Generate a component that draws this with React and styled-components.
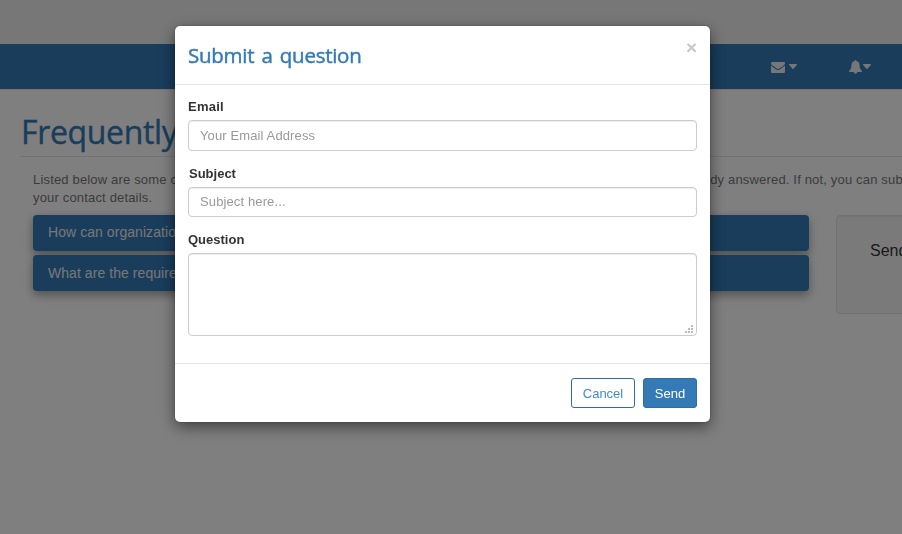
import React from "react";
import styled, { createGlobalStyle } from "styled-components";

const GlobalStyle = createGlobalStyle`
  *, *::before, *::after { box-sizing: border-box; }
  html, body { margin: 0; padding: 0; }
  body {
    overflow: hidden;
    background: #fff;
    color: #777;
    font: 13px/18px "Liberation Sans", Arial, sans-serif;
  }
  button, input, textarea { font: inherit; letter-spacing: inherit; }
`;

const Page = styled.div`
  width: 100%;
  height: 100vh;
  overflow: hidden;
`;

const TopStrip = styled.div`
  height: 44px;
  background: #eee;
`;

const Navbar = styled.nav`
  display: flex;
  justify-content: flex-end;
  align-items: center;
  gap: 52px;
  height: 45px;
  padding-right: 31px;
  background: #337ab7;
  box-shadow: 0 1px 0 #e8e8e8;
`;

const NavItem = styled.a`
  display: flex;
  align-items: center;
  gap: ${(p) => p.$gap}px;
  color: #eee;
  svg { display: block; fill: currentColor; }
`;

const Content = styled.main`
  padding: 0 0 0 20px;
`;

const PageTitle = styled.h1`
  margin: 0;
  height: 68px;
  padding: 23px 0 0 1px;
  border-bottom: 1px solid #e6e6e6;
  color: #337ab7;
  font: 400 32px/40px "Trebuchet MS", "Open Sans", sans-serif;
  letter-spacing: -0.35px;
  -webkit-text-stroke: 0.4px currentColor;
  white-space: nowrap;
`;

const Intro = styled.p`
  margin: 14px 0 8px 13px;
  letter-spacing: 0.17px;
  white-space: nowrap;
`;

const Columns = styled.div`
  display: flex;
  gap: 27px;
  padding-left: 13px;
`;

const QuestionList = styled.div`
  display: flex;
  flex: 0 0 776px;
  flex-direction: column;
  gap: 4px;
`;

const QuestionItem = styled.div`
  height: 36px;
  padding: 0 15px;
  border-radius: 4px;
  background: #337ab7;
  box-shadow: 0 4px 8px rgba(0, 0, 0, 0.2), 0 4px 12px rgba(0, 0, 0, 0.19);
  color: #eee;
  font-size: 14px;
  line-height: ${(p) => p.$line || 35}px;
  letter-spacing: 0.06px;
`;

const AskPanel = styled.aside`
  flex: 0 0 260px;
  height: 99px;
  padding: 25px 33px;
  border: 1px solid #e3e3e3;
  border-radius: 4px;
  background: #f5f5f5;
  box-shadow: inset 0 1px 1px rgba(0, 0, 0, 0.05);
  color: #333;
  font-size: 16px;
  line-height: 20px;
`;

const Backdrop = styled.div`
  position: fixed;
  inset: 0;
  display: flex;
  align-items: flex-start;
  padding: 26px 0 0 175px;
  background: rgba(0, 0, 0, 0.5);
`;

const Dialog = styled.form`
  width: 535px;
  height: 396px;
  border-radius: 5px;
  background: #fff;
  box-shadow: 0 5px 15px rgba(0, 0, 0, 0.5), 0 0 2px rgba(0, 0, 0, 0.3);
`;

const DialogHeader = styled.header`
  display: flex;
  justify-content: space-between;
  height: 59px;
  padding: 14px 13px 0;
  border-bottom: 1px solid #e5e5e5;
`;

const DialogTitle = styled.h2`
  margin: 0;
  color: #337ab7;
  font: 400 20.5px/30px "Trebuchet MS", "Open Sans", sans-serif;
  letter-spacing: -0.27px;
  word-spacing: 2.2px;
  -webkit-text-stroke: 0.45px currentColor;
`;

const CloseButton = styled.button`
  align-self: flex-start;
  height: 14px;
  padding: 0;
  border: 0;
  background: none;
  color: #c8c8c8;
  font-size: 19px;
  font-weight: 700;
  line-height: 13px;
`;

const DialogBody = styled.div`
  height: 279px;
  padding: 13px 13px 0;
  border-bottom: 1px solid #e5e5e5;
`;

const Field = styled.div`
  display: flex;
  flex-direction: column;
  gap: 4px;
  margin-bottom: ${(p) => p.$after || 0}px;
`;

const Label = styled.label`
  padding-left: ${(p) => p.$inset || 0}px;
  color: #333;
  font-weight: 700;
  letter-spacing: ${(p) => p.$tracking || 0}px;
`;

const Input = styled.input`
  width: 100%;
  height: ${(p) => p.$height}px;
  padding: 0 11px ${(p) => p.$lift || 0}px;
  border: 1px solid #ccc;
  border-radius: 4px;
  outline: 0;
  box-shadow: inset 0 1px 1px rgba(0, 0, 0, 0.075);
  letter-spacing: 0.12px;
  &::placeholder { color: #999; opacity: 1; }
`;

const TextAreaFrame = styled.div`
  display: flex;
  position: relative;
  height: 83px;
`;

const TextArea = styled.textarea`
  flex: 1;
  padding: 6px 11px;
  border: 1px solid #ccc;
  border-radius: 4px;
  outline: 0;
  box-shadow: inset 0 1px 1px rgba(0, 0, 0, 0.075);
  resize: none;
`;

const Grip = styled.svg`
  position: absolute;
  right: 4px;
  bottom: 3px;
  fill: #bbb;
`;

const DialogFooter = styled.footer`
  display: flex;
  justify-content: flex-end;
  gap: 8px;
  padding: 14px 13px;
`;

const Button = styled.button`
  width: ${(p) => p.$width}px;
  height: 30px;
  padding: 1px 0 0;
  border: 1px solid #2e6da4;
  border-radius: 3px;
  background: ${(p) => (p.$primary ? "#337ab7" : "#fff")};
  color: ${(p) => (p.$primary ? "#fff" : "#428bca")};
  letter-spacing: 0;
`;

const EnvelopeIcon = () => (
  <svg width="14" height="14" viewBox="0 0 1792 1792">
    <path d="M1792 710v794q0 66-47 113t-113 47h-1472q-66 0-113-47t-47-113v-794q44 49 101 87 362 246 497 345 57 42 92.5 65.5t94.5 48 110 24.5h2q51 0 110-24.5t94.5-48 92.5-65.5q170-123 498-345 57-39 100-87zm0-294q0 79-49 151t-122 123q-376 261-468 325-10 7-42.5 31t-54 38.5-52 32.5-57.5 27-50 9h-2q-23 0-50-9t-57.5-27-52-32.5-54-38.5-42.5-31q-91-64-262-182.5t-205-142.5q-62-42-117-115.5t-55-136.5q0-78 41.5-130t118.5-52h1472q65 0 112.5 47t47.5 113z" />
  </svg>
);

const BellIcon = () => (
  <svg width="13" height="14" viewBox="0 0 13 14">
    <path d="M6.5 0C6 0 5.6.4 5.7 1C3.7 1.4 2.5 3 2.5 4.8C2.5 8 1.7 9.600 0 11C0 11.600 .4 12 1 12H4.700A1.800 1.800 0 0 0 8.300 12H12C12.600 12 13 11.600 13 11C11.300 9.600 10.500 8 10.500 4.800C10.500 3 9.300 1.400 7.300 1C7.400 .4 7 0 6.500 0Z" />
  </svg>
);

const CaretIcon = () => (
  <svg width="8" height="5" viewBox="0 0 8 5">
    <path d="M.5 0H7.500Q8.300.2 7.800.9L4.500 4.700Q4 5.100 3.500 4.700L.2.900Q-.3.200.5 0Z" />
  </svg>
);

export default function App() {
  return (
    <>
      <GlobalStyle />
      <Page>
        <TopStrip />
        <Navbar>
          <NavItem $gap={4} aria-label="Messages">
            <EnvelopeIcon />
            <CaretIcon />
          </NavItem>
          <NavItem $gap={1} aria-label="Notifications">
            <BellIcon />
            <CaretIcon />
          </NavItem>
        </Navbar>
        <Content>
          <PageTitle>Frequently Asked Questions</PageTitle>
          <Intro>
            Listed below are some common questions from our users. Check whether your question has been asked and already answered. If not, you can submit
            <br />
            your contact details.
          </Intro>
          <Columns>
            <QuestionList>
              <QuestionItem>How can organizations</QuestionItem>
              <QuestionItem $line={37}>What are the requirements</QuestionItem>
            </QuestionList>
            <AskPanel>Send</AskPanel>
          </Columns>
        </Content>
      </Page>
      <Backdrop>
        <Dialog onSubmit={(e) => e.preventDefault()}>
          <DialogHeader>
            <DialogTitle>Submit a question</DialogTitle>
            <CloseButton type="button" aria-label="Close">×</CloseButton>
          </DialogHeader>
          <DialogBody>
            <Field $after={14}>
              <Label htmlFor="email" $tracking={0.25}>Email</Label>
              <Input id="email" $height={31} placeholder="Your Email Address" />
            </Field>
            <Field $after={14}>
              <Label htmlFor="subject" $inset={1}>Subject</Label>
              <Input id="subject" $height={30} $lift={2} placeholder="Subject here..." />
            </Field>
            <Field>
              <Label htmlFor="question">Question</Label>
              <TextAreaFrame>
                <TextArea id="question" />
                <Grip width="8" height="8" viewBox="0 0 8 8">
                  <path d="M6 0h2v2H6zM3 3h2v2H3zM6 3h2v2H6zM0 6h2v2H0zM3 6h2v2H3zM6 6h2v2H6z" />
                </Grip>
              </TextAreaFrame>
            </Field>
          </DialogBody>
          <DialogFooter>
            <Button type="button" $width={64}>Cancel</Button>
            <Button $primary $width={54}>Send</Button>
          </DialogFooter>
        </Dialog>
      </Backdrop>
    </>
  );
}
